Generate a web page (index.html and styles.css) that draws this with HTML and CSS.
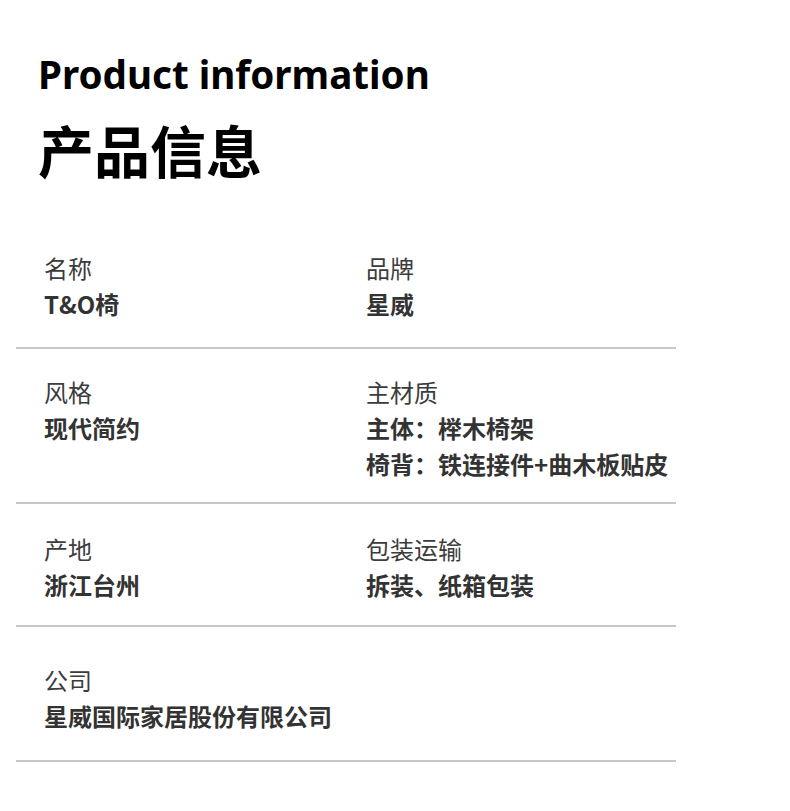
FILE: index.html
```html
<!DOCTYPE html>
<html lang="zh-CN">

<head>
    <meta charset="utf-8">
    <meta name="viewport" content="width=device-width, initial-scale=1.0">
    <title>产品信息</title>

    <link rel="stylesheet" href="styles.css">
</head>

<body>

    <div class="kopf">
        <h1>Product information</h1>
        <h2>产品信息</h2>
    </div>

    <div class="tabelle">
        <div class="zeile zeile-1">
            <div class="feld">
                <p class="label">名称</p>
                <p class="wert">T&amp;O椅</p>
            </div>
            <div class="feld">
                <p class="label">品牌</p>
                <p class="wert">星威</p>
            </div>
        </div>

        <div class="zeile zeile-2">
            <div class="feld">
                <p class="label">风格</p>
                <p class="wert">现代简约</p>
            </div>
            <div class="feld">
                <p class="label">主材质</p>
                <p class="wert">主体：榉木椅架</p>
                <p class="wert">椅背：铁连接件+曲木板贴皮</p>
            </div>
        </div>

        <div class="zeile zeile-3">
            <div class="feld">
                <p class="label">产地</p>
                <p class="wert">浙江台州</p>
            </div>
            <div class="feld">
                <p class="label">包装运输</p>
                <p class="wert">拆装、纸箱包装</p>
            </div>
        </div>

        <div class="zeile zeile-4">
            <div class="feld">
                <p class="label">公司</p>
                <p class="wert">星威国际家居股份有限公司</p>
            </div>
        </div>
    </div>

</body>

</html>
```

FILE: styles.css
```css
body {
    margin: 0;
    background-color: white;
    font-family: "Noto Sans", "Noto Sans CJK SC", sans-serif;
}

p {
    margin: 0;
}

.kopf {
    padding-left: 38px;
    padding-top: 46px;
}

.kopf h1 {
    margin: 0;
    font-family: "Noto Sans", sans-serif;
    font-weight: 700;
    font-size: 38.6px;
    line-height: 56px;
    color: #000000;
}

.kopf h2 {
    margin: 0;
    margin-top: 12px;
    font-family: "Noto Sans CJK SC", sans-serif;
    font-weight: 700;
    font-size: 56px;
    line-height: 70px;
    color: #000000;
}

.tabelle {
    width: 660px;
    margin-left: 16px;
}

.zeile {
    display: grid;
    grid-template-columns: 322px 1fr;
    padding-left: 28px;
    border-bottom: 2px solid #c8c8c8;
}

.zeile-1 {
    padding-top: 66px;
    padding-bottom: 25px;
}

.zeile-2 {
    padding-top: 25px;
    padding-bottom: 20px;
}

.zeile-3 {
    padding-top: 27px;
    padding-bottom: 22px;
}

.zeile-4 {
    padding-top: 35px;
    padding-bottom: 26px;
}

.label {
    font-family: "Noto Sans CJK SC", sans-serif;
    font-weight: 400;
    font-size: 24px;
    line-height: 36px;
    color: #3c3c3c;
}

.wert {
    font-family: "Noto Sans CJK SC", sans-serif;
    font-weight: 700;
    font-size: 24px;
    line-height: 36px;
    color: #333333;
}
```
